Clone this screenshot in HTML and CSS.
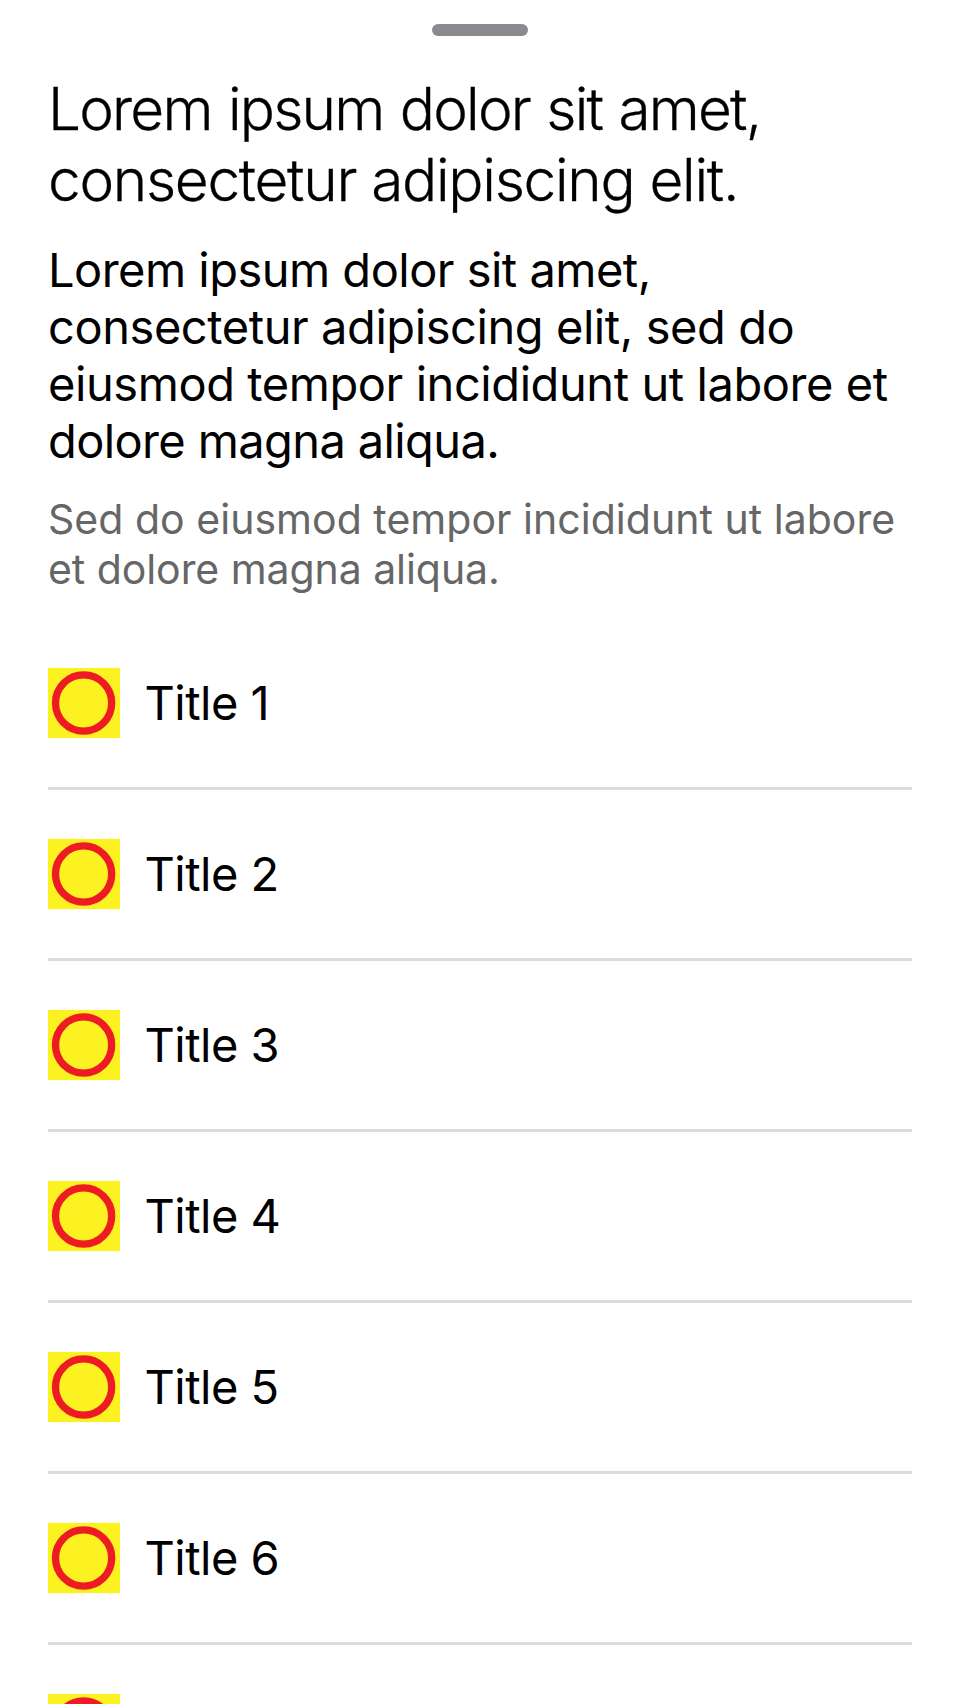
FILE: index.html
```html
<!DOCTYPE html>
<html lang="en">
<head>
<meta charset="utf-8">
<title>Sheet</title>
<link rel="stylesheet" href="styles.css">
</head>
<body>
<main class="sheet">
  <div class="grabber"></div>
  <header class="intro">
    <h1 class="heading"><span class="tight">Lorem ipsum dolor sit amet,</span><br>consectetur adipiscing elit.</h1>
    <p class="lead"><span class="close">Lorem ipsum dolor sit amet,</span><br>consectetur adipiscing elit, sed do<br>eiusmod tempor incididunt ut labore et<br><span class="snug">dolore magna aliqua.</span></p>
    <p class="note">Sed do eiusmod tempor incididunt ut labore<br><span class="even">et dolore magna aliqua.</span></p>
  </header>
  <ul class="list">
    <li class="row"><svg class="icon" viewBox="0 0 72 72"><rect class="tile" y="0.9" width="72" height="70.2"/><circle class="ring" cx="35.6" cy="36" r="28.1"/></svg><span class="title">Title 1</span></li>
    <li class="row"><svg class="icon" viewBox="0 0 72 72"><rect class="tile" y="0.9" width="72" height="70.2"/><circle class="ring" cx="35.6" cy="36" r="28.1"/></svg><span class="title">Title 2</span></li>
    <li class="row"><svg class="icon" viewBox="0 0 72 72"><rect class="tile" y="0.9" width="72" height="70.2"/><circle class="ring" cx="35.6" cy="36" r="28.1"/></svg><span class="title">Title 3</span></li>
    <li class="row"><svg class="icon" viewBox="0 0 72 72"><rect class="tile" y="0.9" width="72" height="70.2"/><circle class="ring" cx="35.6" cy="36" r="28.1"/></svg><span class="title">Title 4</span></li>
    <li class="row"><svg class="icon" viewBox="0 0 72 72"><rect class="tile" y="0.9" width="72" height="70.2"/><circle class="ring" cx="35.6" cy="36" r="28.1"/></svg><span class="title">Title 5</span></li>
    <li class="row"><svg class="icon" viewBox="0 0 72 72"><rect class="tile" y="0.9" width="72" height="70.2"/><circle class="ring" cx="35.6" cy="36" r="28.1"/></svg><span class="title">Title 6</span></li>
    <li class="row"><svg class="icon" viewBox="0 0 72 72"><rect class="tile" y="0.9" width="72" height="70.2"/><circle class="ring" cx="35.6" cy="36" r="28.1"/></svg></li>
  </ul>
</main>
</body>
</html>
```
FILE: styles.css
```css
* { box-sizing: border-box; margin: 0; padding: 0; }
body { background: #fff; color: #000; font-family: Inter, "Liberation Sans", sans-serif; }
.sheet { height: 1704px; overflow: hidden; padding: 24px 48px 0; display: flex; flex-direction: column; }
.grabber { flex: none; align-self: center; width: 96px; height: 12px; border-radius: 6px; background: #8a8b8e; }
.intro { flex: none; height: 583px; padding-top: 37px; white-space: nowrap; }
.heading { font-size: 58.5px; line-height: 71px; font-weight: 340; letter-spacing: -1.3px; -webkit-text-stroke: 0.3px #000; }
.tight { letter-spacing: -1.8px; word-spacing: 1.6px; }
.lead { margin-top: 26px; font-size: 47px; line-height: 57px; letter-spacing: -0.43px; }
.close { letter-spacing: -0.52px; }
.snug { letter-spacing: -0.62px; }
.note { margin-top: 25px; font-size: 41px; line-height: 50px; color: #666; letter-spacing: 0.03px; }
.even { letter-spacing: -0.06px; }
.list { flex: none; list-style: none; }
.row { height: 171px; border-bottom: 3px solid #dcdcdc; display: flex; align-items: center; gap: 24.5px; }
.icon { width: 72px; height: 72px; flex: none; }
.tile { fill: #fcf222; }
.ring { fill: none; stroke: #ed1c24; stroke-width: 7.3; }
.title { font-size: 47px; line-height: 57px; letter-spacing: -0.5px; padding-bottom: 2px; }
```
